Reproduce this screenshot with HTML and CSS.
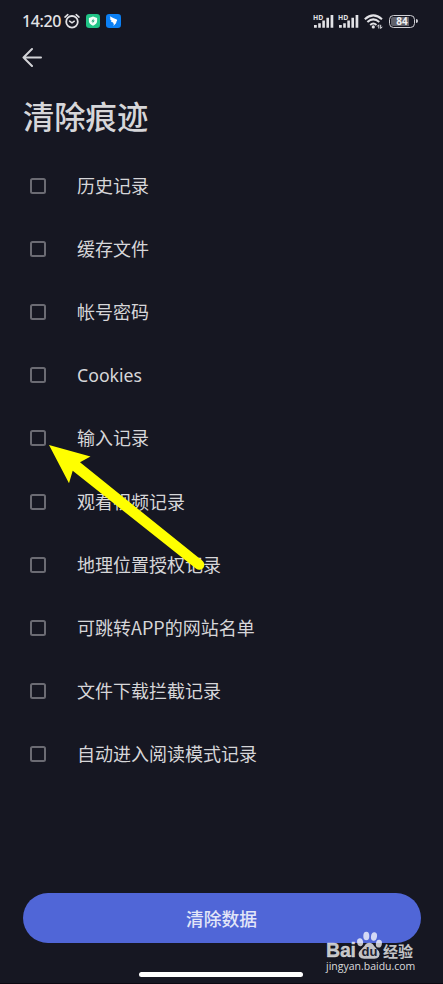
FILE: index.html
```
<!DOCTYPE html>
<html lang="zh-CN">
<head>
    <meta charset="UTF-8">
    <meta name="viewport" content="width=device-width, initial-scale=1.0">
    <title>清除痕迹</title>
    <link rel="stylesheet" href="styles.css">
</head>
<body>

    <div class="status">
        <span class="time">14:20</span>
        <svg class="alarm" width="16" height="16" viewBox="0 0 16 16" fill="none" stroke="#e2e2e6" stroke-linecap="round">
            <circle cx="8" cy="8.8" r="5.8" stroke-width="1.8"/>
            <path d="M5.6 8.1 L8 9.9 L10.3 8.2" stroke-width="1.5"/>
            <path d="M1 4.1 L3.8 1.7 M15 4.1 L12.2 1.7" stroke-width="1.6"/>
        </svg>
        <svg class="shield" width="14" height="14" viewBox="0 0 14 14">
            <rect width="14" height="14" rx="3.2" fill="#20c486"/>
            <path d="M7 2.5 L11.1 4 V7.1 Q11 10.2 7 11.7 Q3 10.2 2.9 7.1 V4 Z" fill="#f2fff9"/>
            <path d="M7.6 4.6 L5.3 7.6 H6.8 L6.4 9.5 L8.8 6.5 H7.3 Z" fill="#20a878"/>
        </svg>
        <svg width="15" height="14" viewBox="0 0 15 14">
            <rect width="15" height="14" rx="3.2" fill="#0b80f5"/>
            <path d="M3.8 2.2 Q7 3.9 10.8 5.6 Q11.4 6.1 10.9 7.1 L9.8 8.5 H10.7 L7.4 12 L8 9.5 H6.9 L7.2 8.6 Q5.2 8.3 4.8 6.8 L6 6.9 Q4 5.8 3.8 4.3 L5 4.6 Q3.9 3.5 3.8 2.2 Z" fill="#fff"/>
        </svg>
        <div class="signals">
            <svg width="22" height="16" viewBox="0 0 22 16" fill="#e2e2e6">
                <text x="0" y="7.5" class="hd">HD</text>
                <path d="M1 13h2.8v2.7H1zM5.2 11.2h2.6v4.5H5.2zM9.3 8.6h2.6v7.1H9.3zM13.4 5.8h2.6v9.9h-2.6zM17.6 3h2.7v12.7h-2.7z"/>
            </svg>
            <svg width="22" height="16" viewBox="0 0 22 16" fill="#e2e2e6">
                <text x="0" y="7.5" class="hd">HD</text>
                <path d="M1 13h2.8v2.7H1zM5.2 11.2h2.6v4.5H5.2zM9.3 8.6h2.6v7.1H9.3zM13.4 5.8h2.6v9.9h-2.6zM17.6 3h2.7v12.7h-2.7z"/>
            </svg>
        </div>
        <svg class="wifi" width="20" height="15" viewBox="0 0 20 15" fill="none" stroke="#e2e2e6" stroke-width="2">
            <path d="M.8 5.2 Q9.3 -2.5 18 5.2"/>
            <path d="M3.4 8.1 Q9.3 2.7 15.3 8.1"/>
            <path d="M6.2 10.9 Q9.3 8.2 12.5 10.9"/>
            <circle cx="9.3" cy="12.9" r="1.6" fill="#e2e2e6" stroke="none"/>
            <path d="M14.8 14.5 V10.8 L13.2 12.5 M16.7 10.8 V14.5 L18.3 12.8" stroke-width="1"/>
        </svg>
        <div class="battery"><span>84</span></div>
    </div>

    <div class="nav">
        <svg width="20" height="20" viewBox="0 0 20 20" fill="none" stroke="#d2d3d7" stroke-width="2" stroke-linecap="round" stroke-linejoin="round">
            <path d="M19 10.5 H1.5 M10 2 L1.5 10.5 L10 19"/>
        </svg>
    </div>

    <h1>清除痕迹</h1>

    <div class="list">
        <label class="row"><span class="box"></span><span class="name">历史记录</span></label>
        <label class="row"><span class="box"></span><span class="name">缓存文件</span></label>
        <label class="row"><span class="box"></span><span class="name">帐号密码</span></label>
        <label class="row"><span class="box"></span><span class="latin">Cookies</span></label>
        <label class="row"><span class="box"></span><span class="name">输入记录</span></label>
        <label class="row"><span class="box"></span><span class="name">观看视频记录</span></label>
        <label class="row"><span class="box"></span><span class="name">地理位置授权记录</span></label>
        <label class="row"><span class="box"></span><span class="name">可跳转APP的网站名单</span></label>
        <label class="row"><span class="box"></span><span class="name">文件下载拦截记录</span></label>
        <label class="row"><span class="box"></span><span class="name">自动进入阅读模式记录</span></label>
    </div>

    <div class="footer">
        <button class="clear">清除数据</button>
        <div class="home-bar"></div>
    </div>

    <!-- pointer over the 输入记录 checkbox -->
    <svg class="pointer" width="165" height="135" viewBox="0 0 165 135" fill="#ffff00">
        <path d="M4 5 L45.5 16.5 L35 22.3 L157.4 120.8 A5 5 0 0 1 151.2 128.8 L27.7 30.7 L24 43.2 Z"/>
    </svg>

    <div class="watermark">
        <div class="brand">
            <span class="bai">Bai</span>
            <svg width="28" height="30" viewBox="0 0 28 30" fill="currentColor">
                <ellipse cx="4.1" cy="12.2" rx="3" ry="4" transform="rotate(-8 4.1 12.2)"/>
                <ellipse cx="10.3" cy="6" rx="3" ry="4.3"/>
                <ellipse cx="18" cy="6.5" rx="3" ry="4.2" transform="rotate(10 18 6.5)"/>
                <ellipse cx="22.9" cy="13.7" rx="3" ry="3.9" transform="rotate(10 22.9 13.7)"/>
                <path d="M13.3 12.7 Q16.2 12.7 18.1 16 L22.8 21.2 Q24.5 24 22.9 26.8 Q21.2 29 17.7 28.8 H8.8 Q5.1 29 3.3 26.8 Q1.7 23.7 3.8 21 L8.4 16 Q10.3 12.7 13.3 12.7 Z"/>
                <text x="5.5" y="26" class="du">du</text>
            </svg>
            <span class="jingyan">经验</span>
        </div>
        <div class="site">jingyan.baidu.com</div>
    </div>

</body>
</html>
```
FILE: styles.css
```
* {
    box-sizing: border-box;
}
body {
    margin: 0;
    height: 984px;
    position: relative;
    overflow: hidden;
    display: flex;
    flex-direction: column;
    background-color: #161722;
    color: #d6d6d9;
    font-family: "Noto Sans CJK SC", sans-serif;
    border-bottom: 1px solid #0c0811;
}
svg {
    display: block;
    flex: none;
}
.status {
    height: 42px;
    padding: 0 25px 0 22px;
    display: flex;
    align-items: center;
    color: #e2e2e6;
}
.time {
    width: 42px;
    font: 500 16px/20px "Noto Sans", sans-serif;
    letter-spacing: -0.4px;
}
.alarm {
    margin-right: 6px;
}
.shield {
    margin-right: 6px;
}
.signals {
    display: flex;
    gap: 3px;
    margin-left: auto;
    margin-top: -2px;
}
.hd {
    font: bold 6.8px "Open Sans", sans-serif;
}
.wifi {
    margin: 1px 5px 0 4px;
}
.battery {
    position: relative;
    width: 26px;
    height: 13px;
    margin-right: 3px;
    padding: 1px;
    border: 1.5px solid #d0d0d5;
    border-radius: 4.5px;
}
.battery span {
    display: block;
    height: 9px;
    border-radius: 2px;
    background: linear-gradient(90deg, #60616a 84%, transparent 84%);
    color: #f0f0f2;
    font: bold 10px/9px "Open Sans", sans-serif;
    text-align: center;
}
.battery::after {
    content: "";
    position: absolute;
    right: -4px;
    top: 3px;
    width: 2px;
    height: 4px;
    border-radius: 0 2px 2px 0;
    background-color: #d0d0d5;
}
.nav {
    height: 32px;
    padding: 5px 0 0 22px;
}
h1 {
    margin: 0;
    height: 80px;
    padding-left: 23px;
    font-size: 31.3px;
    font-weight: 500;
    line-height: 84px;
}
.list {
    display: grid;
    grid-auto-rows: 63.2px;
}
.row {
    display: flex;
    align-items: center;
    padding-left: 30px;
    font-size: 18px;
    line-height: 26px;
}
.box {
    width: 16px;
    height: 16px;
    margin-right: 31px;
    border: 2px solid #6b6b73;
    border-radius: 2.5px;
}
.name {
    padding-bottom: 2px;
}
.latin {
    font-family: "Noto Sans", sans-serif;
    font-size: 17.7px;
}
.footer {
    margin-top: auto;
    height: 90px;
    padding: 0 22px;
}
.clear {
    display: block;
    width: 398px;
    height: 50px;
    margin: 0 auto;
    padding: 0 0 1px;
    border: 0;
    border-radius: 25px;
    background-color: #5066d7;
    color: #e3e6f8;
    font: 500 17.8px "Noto Sans CJK SC", sans-serif;
}
.home-bar {
    width: 164px;
    height: 5px;
    margin: 29px 0 0 117px;
    border-radius: 3px;
    background-color: #fff;
}
.pointer {
    position: absolute;
    left: 45px;
    top: 440px;
}
.watermark {
    position: absolute;
    left: 326px;
    top: 930px;
    width: 92px;
    color: rgba(255, 255, 255, 0.75);
}
.brand {
    display: flex;
    align-items: flex-end;
    height: 30px;
}
.bai {
    width: 30px;
    font: bold 19.5px/19px "Liberation Sans", sans-serif;
    letter-spacing: -0.2px;
    -webkit-text-stroke: 0.4px rgba(255, 255, 255, 0.6);
}
.du {
    font: bold 13px "Liberation Sans", sans-serif;
    fill: #202130;
}
.jingyan {
    margin-left: -1px;
    font-size: 15px;
    font-weight: 700;
    line-height: 19px;
    white-space: nowrap;
}
.site {
    font: 10.5px/12px "Open Sans", sans-serif;
    color: rgba(255, 255, 255, 0.85);
}
```
